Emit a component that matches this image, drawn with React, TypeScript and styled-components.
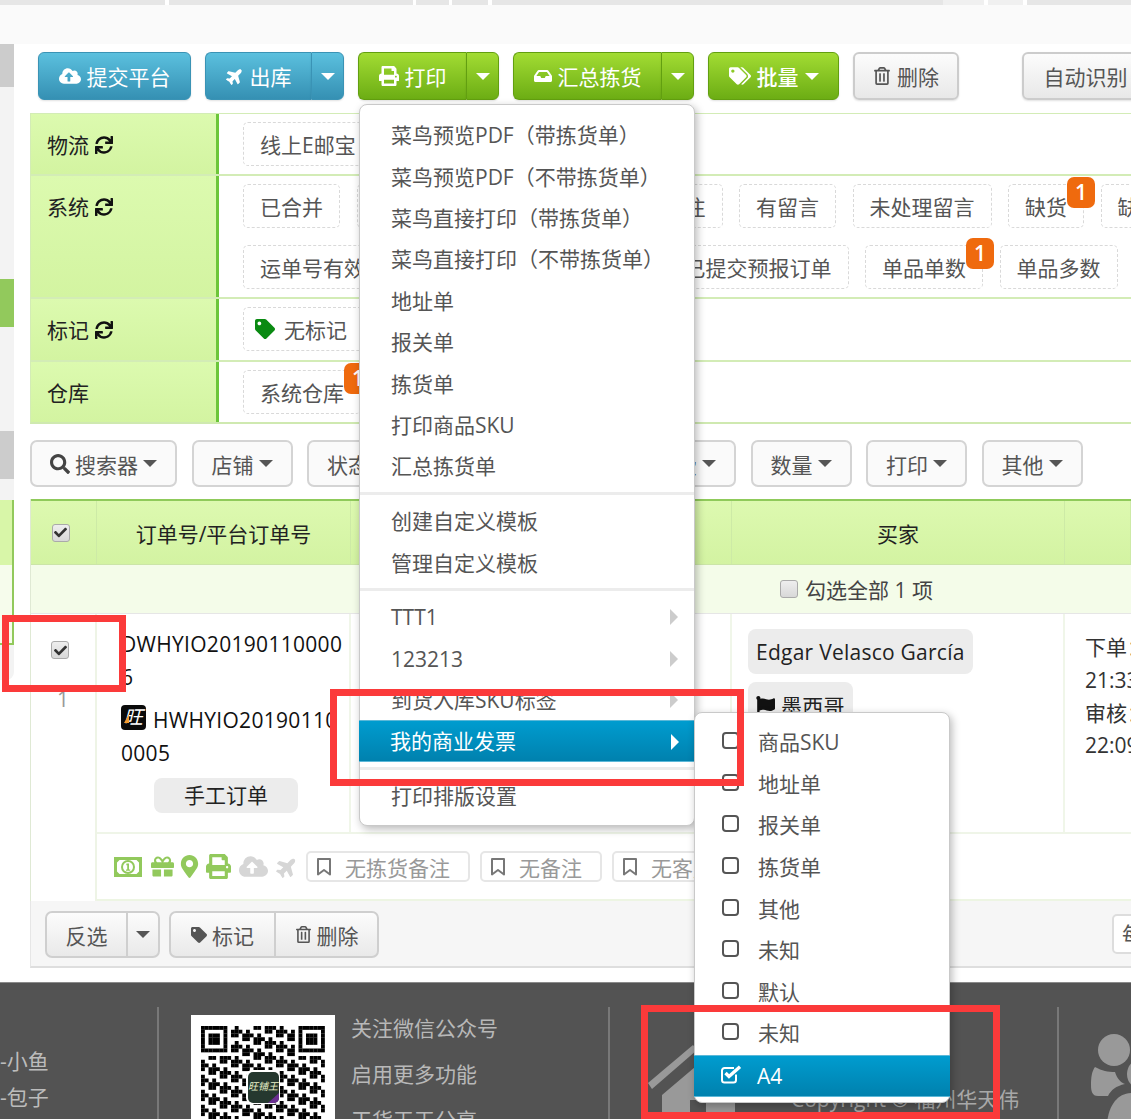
import React from 'react';
import styled, { createGlobalStyle, css } from 'styled-components';
import {
  FaCloudUploadAlt, FaPlane, FaPrint, FaInbox, FaTags, FaTag, FaRegTrashAlt, FaSync, FaSearch,
  FaCheck, FaGift, FaMapMarkerAlt, FaFlag,
} from 'react-icons/fa';

const FONT = '"Open Sans","Noto Sans CJK SC",sans-serif';

const Global = createGlobalStyle`
  html, body { margin: 0; padding: 0; background: #fff; }
  body { font-family: ${FONT}; font-size: 21px; color: #333; }
  * { box-sizing: border-box; }
`;

const Page = styled.div`
  position: relative;
  width: 1131px;
  height: 1119px;
  overflow: hidden;
  background: #fff;
`;

const TopStrip = styled.div`
  height: 5px;
  background: linear-gradient(90deg,
    #e6e6e6 165px, #fff 165px, #fff 169px, #e6e6e6 169px,
    #e6e6e6 413px, #fff 413px, #fff 416px, #e6e6e6 416px,
    #e6e6e6 449px, #fff 449px, #fff 452px, #e6e6e6 452px,
    #e6e6e6 488px, #fff 488px, #fff 492px, #e6e6e6 492px,
    #e6e6e6 943px, #f0f0f0 943px, #f0f0f0 984px, #fff 984px, #fff 988px, #f0f0f0 988px,
    #f0f0f0 1023px, #fff 1023px, #fff 1027px, #e6e6e6 1027px);
`;

const HeadBand = styled.div`
  height: 39px;
  background: #fafafa;
`;

const Body = styled.div`
  display: flex;
  height: 938px;
`;

const Side = styled.div`
  flex: 0 0 14px;
  display: flex;
  flex-direction: column;
`;

const SideBlock = styled.div<{ $h: number; $c: string; $edge?: boolean; $round?: boolean }>`
  height: ${p => p.$h}px;
  background: ${p => p.$c};
  ${p => p.$edge && css`border-right: 2px solid #92c95c;`}
  ${p => p.$edge && p.$round && css`border-bottom: 2px solid #92c95c;`}
  ${p => p.$round && !p.$edge && css`border-bottom-right-radius: 8px;`}
`;

const Main = styled.div`
  flex: 1;
  min-width: 0;
  padding-left: 16px;
  display: flex;
  flex-direction: column;
`;

const Toolbar = styled.div`
  display: flex;
  gap: 14px;
  padding: 8px 0 0 8px;
  width: 1300px;
`;

const variants = {
  blue: css`
    background: linear-gradient(180deg, #5bc0de, #3590b3);
    border: 1px solid #3a93b5;
    color: #fff;
  `,
  green: css`
    background: linear-gradient(180deg, #a2dc33, #6cad14);
    border: 1px solid #629f10;
    color: #fff;
  `,
  gray: css`
    background: linear-gradient(180deg, #fcfcfc, #e8e8e8);
    border: 2px solid #cccccc;
    color: #555;
  `,
};

type Kind = keyof typeof variants;

const ToolGroup = styled.div<{ $ml?: number }>`
  display: flex;
  flex: 0 0 auto;
  margin-left: ${p => p.$ml ?? 0}px;
`;

const ToolBtn = styled.div<{ $kind: Kind; $split?: boolean; $px?: number; $bold?: boolean }>`
  ${p => variants[p.$kind]}
  flex: 0 0 auto;
  height: 48px;
  padding: 0 ${p => p.$px ?? 19.5}px;
  display: flex;
  align-items: center;
  gap: 6px;
  border-radius: ${p => (p.$split ? '6px 0 0 6px' : '6px')};
  ${p => p.$split && css`border-right: none;`}
  ${p => p.$bold && css`font-weight: 500;`}
  white-space: nowrap;
  box-shadow: 0 1px 2px rgba(0,0,0,.12);
`;

const ToolCaret = styled.div<{ $kind: Kind }>`
  ${p => variants[p.$kind]}
  width: 33px;
  height: 48px;
  display: flex;
  align-items: center;
  justify-content: center;
  border-radius: 0 6px 6px 0;
  box-shadow: 0 1px 2px rgba(0,0,0,.12);
`;

const Caret = styled.i`
  display: inline-block;
  flex: 0 0 auto;
  width: 0;
  height: 0;
  border-left: 7px solid transparent;
  border-right: 7px solid transparent;
  border-top: 7px solid currentColor;
`;

const Panel = styled.div`
  margin-top: 13px;
  width: 1101px;
  border-top: 1px solid #d3ecb6;
  border-bottom: 2px solid #cfe9b0;
  border-left: 1px solid #d3ecb6;
`;

const PanelRow = styled.div<{ $last?: boolean }>`
  display: flex;
  ${p => !p.$last && css`border-bottom: 2px solid #d3ecb6;`}
`;

const PanelLabel = styled.div`
  flex: 0 0 188px;
  padding: 15px 0 0 16px;
  border-right: 3px solid #6cc63a;
  background: linear-gradient(180deg, #dcfaaf, #d3f4a1);
  color: #222;
  line-height: 32px;
  display: flex;
  align-items: flex-start;
  gap: 6px;
  & svg { margin-top: 7px; color: #111; }
`;

const PanelTags = styled.div`
  flex: 1;
  min-width: 0;
  display: flex;
  flex-direction: column;
  gap: 16.7px;
  padding: 8px 0 8.4px 24px;
`;

const TagLine = styled.div`
  display: flex;
  gap: 16.5px;
`;

const Tag = styled.div`
  position: relative;
  flex: 0 0 auto;
  height: 44px;
  padding: 0 16px;
  display: flex;
  align-items: center;
  gap: 9px;
  border: 1px dashed #d9d9d9;
  border-radius: 5px;
  color: #555;
  white-space: nowrap;
`;

const MarkIcon = styled(FaTag)`
  margin-left: -5px;
  color: #0a8a12;
`;

const Badge = styled.span`
  position: absolute;
  top: -8px;
  right: -12px;
  width: 28px;
  height: 31px;
  border-radius: 7px;
  background: #ef6a0e;
  color: #fff;
  font-size: 21px;
  font-weight: 600;
  line-height: 31px;
  text-align: center;
`;

const FilterBar = styled.div`
  display: flex;
  gap: 14.5px;
  margin-top: 16px;
  width: 1200px;
`;

const FilterBtn = styled.div<{ $w?: number }>`
  flex: 0 0 auto;
  height: 47px;
  padding: 0 18px;
  ${p => p.$w && css`width: ${p.$w}px; justify-content: flex-end;`}
  display: flex;
  align-items: center;
  gap: 5px;
  background: #fafafa;
  border: 2px solid #d4d4d4;
  border-radius: 7px;
  color: #555;
  white-space: nowrap;
`;

const Table = styled.div`
  margin-top: 12px;
  width: 1101px;
  border-left: 1px solid #dfe9d4;
`;

const HeaderRow = styled.div`
  display: grid;
  grid-template-columns: 66px 254px 381px 333px 1fr;
  height: 66px;
  border-top: 2px solid #8fca5a;
  border-bottom: 1px solid #cbe5a7;
  background: linear-gradient(180deg, #ddf9b0, #d3f3a2);
`;

const HeadCell = styled.div`
  display: flex;
  align-items: center;
  justify-content: center;
  border-right: 1px solid #cdeaa6;
  color: #222;
`;

const Check = styled.span<{ $on?: boolean }>`
  flex: 0 0 auto;
  width: 18px;
  height: 18px;
  ${p => p.$on && css`margin-right: 6px;`}
  display: inline-flex;
  align-items: center;
  justify-content: center;
  border: 1px solid #aaa;
  border-radius: 3px;
  background: linear-gradient(180deg, #eee, #d8d8d8);
  color: #333;
  font-size: 13px;
`;

const SelectAll = styled.div`
  height: 49px;
  padding-left: 749px;
  display: flex;
  align-items: center;
  gap: 7px;
  background: #f4fce9;
  border-bottom: 1px solid #e6e6e6;
  color: #444;
`;

const OrderRow = styled.div`
  display: flex;
`;

const IndexCell = styled.div`
  flex: 0 0 66px;
  display: flex;
  flex-direction: column;
  align-items: center;
  padding-top: 27px;
  gap: 26px;
  border-right: 2px solid #eef4e6;
  color: #999;
`;

const OrderBody = styled.div`
  flex: 1;
  min-width: 0;
`;

const Cells = styled.div`
  display: grid;
  grid-template-columns: 254px 381px 333px 1fr;
  height: 220px;
  border-bottom: 2px solid #eff5e8;
`;

const Cell = styled.div`
  border-right: 2px solid #f0f6e9;
`;

const OrderCell = styled(Cell)`
  padding: 14px 4px 0 24px;
  line-height: 33px;
  letter-spacing: 0.3px;
  color: #111;
  word-break: break-all;
`;

const PlatformLine = styled.div`
  margin-top: 10px;
`;

const ShopLogo = styled.span`
  position: relative;
  display: inline-flex;
  align-items: center;
  justify-content: center;
  width: 25px;
  height: 25px;
  margin-right: 7px;
  vertical-align: 4px;
  border-radius: 4px;
  background: #0a0a0a;
  color: #fff;
  font-size: 19px;
  font-style: italic;
  line-height: 25px;
  overflow: hidden;
  &::before {
    content: '';
    position: absolute;
    left: 3px;
    top: 9px;
    border-left: 5px solid transparent;
    border-bottom: 9px solid #f19a2e;
  }
`;

const ManualPill = styled.div`
  width: 144px;
  height: 35px;
  margin: 8px 0 0 33px;
  border-radius: 8px;
  background: #ececec;
  color: #222;
  letter-spacing: 0;
  line-height: 35px;
  text-align: center;
`;

const BuyerCell = styled(Cell)`
  padding: 15px 0 0 16px;
  display: flex;
  flex-direction: column;
  align-items: flex-start;
  gap: 8px;
`;

const BuyerPill = styled.div`
  display: inline-flex;
  align-items: center;
  gap: 6px;
  height: 45px;
  padding: 1px 8px 0;
  border-radius: 8px;
  background: #ececec;
  color: #222;
  letter-spacing: 0.25px;
  white-space: nowrap;
`;

const TimeCell = styled.div`
  padding: 17px 0 0 20px;
  line-height: 32.7px;
  color: #333;
  white-space: pre;
`;

const Actions = styled.div`
  height: 67px;
  padding: 0 0 0 12px;
  display: flex;
  align-items: center;
  border-bottom: 2px solid #edf5e3;
  white-space: nowrap;
`;

const ActionIcon = styled.span<{ $w: number; $off?: boolean }>`
  flex: 0 0 ${p => p.$w}px;
  display: flex;
  justify-content: center;
  color: ${p => (p.$off ? '#d6d6d6' : '#92c95c')};
`;

const NoteRow = styled.div`
  display: flex;
  gap: 10px;
  margin-left: 4px;
`;

const Note = styled.div`
  flex: 0 0 auto;
  height: 31px;
  padding: 0 18px 0 8px;
  display: flex;
  align-items: center;
  gap: 13px;
  border: 2px solid #e6e6e6;
  border-radius: 5px;
  color: #999;
`;

const Pager = styled.div`
  width: 1101px;
  height: 67px;
  padding: 10px 0 0 14px;
  display: flex;
  align-items: flex-start;
  background: #f6f6f6;
  border-bottom: 2px solid #dedede;
  border-left: 1px solid #e6e6e6;
`;

const PagerBtn = styled.div<{ $pos: 'l' | 'r'; $w: number }>`
  width: ${p => p.$w}px;
  height: 47px;
  display: flex;
  align-items: center;
  justify-content: center;
  gap: 5px;
  background: linear-gradient(180deg, #fcfcfc, #e9e9e9);
  border: 2px solid #cfcfcf;
  color: #555;
  border-radius: ${p => (p.$pos === 'l' ? '7px 0 0 7px' : '0 7px 7px 0')};
  ${p => p.$pos === 'r' && css`border-left-width: 1px;`}
  ${p => p.$pos === 'l' && css`border-right-width: 1px;`}
`;

const PagerGroup = styled.div<{ $ml?: number }>`
  display: flex;
  margin-left: ${p => p.$ml ?? 0}px;
`;

const PageSize = styled.div`
  flex: 0 0 90px;
  height: 40px;
  margin: 3px 0 0 733px;
  padding-left: 8px;
  background: #fff;
  border: 2px solid #ddd;
  border-radius: 5px;
  color: #555;
  line-height: 36px;
  white-space: nowrap;
`;

const Footer = styled.div`
  height: 137px;
  display: grid;
  grid-template-columns: 159px 451px 449px 1fr;
  padding-top: 24px;
  background: #535353;
  border-top: 1px solid #8a8a8a;
  color: #bcbcbc;
`;

const FootCol = styled.div<{ $line?: boolean }>`
  position: relative;
  height: 200px;
  ${p => p.$line && css`border-right: 2px solid #787878;`}
`;

const ContactCol = styled(FootCol)`
  padding-top: 36px;
  line-height: 36px;
`;

const WechatCol = styled(FootCol)`
  display: flex;
  padding: 8px 0 0 32px;
  gap: 16px;
`;

const QrBox = styled.div`
  flex: 0 0 144px;
  height: 144px;
  background: #fff;
`;

const WechatText = styled.div`
  margin-top: -10px;
  line-height: 46px;
  color: #b8b8b8;
`;

const HomeCol = styled(FootCol)`
  display: flex;
  padding: 20px 0 0 37px;
`;

const Copyright = styled.div`
  position: absolute;
  left: 181px;
  top: 76px;
  color: #a8a8a8;
  white-space: nowrap;
`;

const PeopleCol = styled(FootCol)`
  padding: 20px 0 0 31px;
`;

const Menu = styled.div<{ $x: number; $y: number; $w: number; $h: number }>`
  position: absolute;
  left: ${p => p.$x}px;
  top: ${p => p.$y}px;
  width: ${p => p.$w}px;
  height: ${p => p.$h}px;
  padding-top: 9.3px;
  background: #fff;
  border: 1px solid #c9c9c9;
  border-radius: 8px;
  box-shadow: 2px 3px 8px rgba(0,0,0,.28);
  color: #555;
  z-index: 2;
`;

const Item = styled.div<{ $active?: boolean; $sub?: boolean }>`
  position: relative;
  height: ${p => (p.$sub ? 41.6 : 41.4)}px;
  padding-left: ${p => (p.$sub ? 63 : 31)}px;
  line-height: ${p => (p.$sub ? 41.4 : 43)}px;
  white-space: nowrap;
  ${p => p.$active && css`
    margin: 0 -1px;
    color: #fff;
    background: linear-gradient(180deg, #009ccf, #0081ae);
    border-top: 1px solid #5cb8d8;
    border-bottom: 1px solid #5cb8d8;
    line-height: 40.4px;
  `}
`;

const Arrow = styled.i<{ $active?: boolean }>`
  position: absolute;
  right: 16px;
  top: 13px;
  border-top: 8px solid transparent;
  border-bottom: 8px solid transparent;
  border-left: 8px solid ${p => (p.$active ? '#fff' : '#ccc')};
`;

const Divider = styled.div`
  height: 3px;
  margin: 5px 0 5.3px;
  background: #ececec;
`;

const SubBox = styled.span`
  position: absolute;
  left: 27px;
  top: 10px;
  width: 17px;
  height: 17px;
  border: 2px solid #555;
  border-radius: 4px;
`;

const SubCheck = styled.span`
  position: absolute;
  left: 27px;
  top: 9px;
  display: flex;
`;

const RedBox = styled.div<{ $x: number; $y: number; $w: number; $h: number }>`
  position: absolute;
  left: ${p => p.$x}px;
  top: ${p => p.$y}px;
  width: ${p => p.$w}px;
  height: ${p => p.$h}px;
  border: 7px solid #fb3a3a;
  z-index: 3;
`;

const BookmarkIcon = () => (
  <svg width="16" height="18" viewBox="0 0 16 18" fill="none" stroke="#777" strokeWidth="2" strokeLinejoin="round">
    <path d="M2 1h12v15.500l-6-4.500-6 4.500z" />
  </svg>
);

const CheckSquareIcon = () => (
  <svg width="21" height="19" viewBox="0 0 21 19" fill="none" stroke="#fff">
    <path d="M15 9.500V15a2.500 2.500 0 0 1-2.500 2.500H3.500A2.500 2.500 0 0 1 1 15V5.500A2.500 2.500 0 0 1 3.500 3H13" strokeWidth="2" />
    <path d="M4.500 8 8 11.500 19 1.800" strokeWidth="3.400" />
  </svg>
);

const MoneyIcon = () => (
  <svg width="28" height="20" viewBox="0 0 28 20">
    <path fill="#92c95c" fillRule="evenodd" d="M0 0h28v20H0zM5.500 3 3 5.500v9L5.500 17h17l2.500-2.500v-9L22.500 3z" />
    <circle cx="14" cy="10" r="7" fill="#92c95c" />
    <circle cx="14" cy="10" r="5" fill="#fff" />
    <path fill="#92c95c" d="M12.500 6.500h2.500v6h1.200v1.300h-4.200v-1.300h1.200V8.200h-1z" />
  </svg>
);

const Qr = () => {
  const N = 33;
  const cell = 3.75;
  const inFinder = (x: number, y: number, ox: number, oy: number) => x >= ox && x < ox + 8 && y >= oy && y < oy + 8;
  const finderOn = (x: number, y: number, ox: number, oy: number) => {
    const a = x - ox;
    const b = y - oy;
    if (a === 7 || b === 7 || a < 0 || b < 0) return false;
    if (a === 0 || a === 6 || b === 0 || b === 6) return true;
    return a >= 2 && a <= 4 && b >= 2 && b <= 4;
  };
  const cells: React.ReactNode[] = [];
  let seed = 20190110;
  for (let y = 0; y < N; y += 1) {
    for (let x = 0; x < N; x += 1) {
      seed = (seed * 1103 + 12345) % 2147483;
      let on = (seed >> 6) % 100 < 52;
      if (inFinder(x, y, 0, 0)) on = finderOn(x, y, 0, 0);
      else if (inFinder(x, y, 25, 0)) on = finderOn(x, y, 26, 0);
      else if (inFinder(x, y, 0, 25)) on = finderOn(x, y, 0, 26);
      if (on) cells.push(<rect key={`${x}-${y}`} x={x * cell + 10} y={y * cell + 11} width={cell + 0.1} height={cell + 0.1} />);
    }
  }
  return (
    <svg width="144" height="144" viewBox="0 0 144 144">
      <g fill="#000">{cells}</g>
      <rect x="55" y="55" width="34" height="34" rx="6" fill="#fff" />
      <rect x="57" y="57" width="31" height="31" rx="5" fill="#25382f" />
      <path d="M88 78v5a5 5 0 0 1-5 5h-6z" fill="#6a2f91" />
      <text x="72" y="75" textAnchor="middle" fontSize="10" fontStyle="italic" fill="#e8f0c8" fontFamily={FONT}>旺铺王</text>
    </svg>
  );
};

const HomeIcon = () => (
  <svg width="100" height="92" viewBox="0 0 100 92" fill="#999999">
    <path d="M1 56 46 18l4 5L5 62z" />
    <path d="M15 68 48 40l40 30v22H59V73H43v19H15z" />
  </svg>
);

const PeopleIcon = () => (
  <svg width="60" height="100" viewBox="0 0 60 100" fill="#999999">
    <circle cx="24" cy="23" r="16" />
    <path d="M5 40c7 4 13 5 20 5 2 6 5 10 10 12-9 2-14 6-17 12H8C2 69 1 64 1 58 1 50 2 44 5 40z" />
    <circle cx="53" cy="47" r="16" />
    <path d="M17 100c0-17 8-34 25-34l20 0v34z" />
  </svg>
);

const Refresh = () => <FaSync size={18} />;

const sysTags1: { t: string; b?: boolean }[] = [
  { t: '已合并' }, { t: '未合并' }, { t: '有备注' }, { t: '未处理备注' }, { t: '有留言' }, { t: '未处理留言' }, { t: '缺货', b: true }, { t: '缺货已处理' },
];
const sysTags2: { t: string; b?: boolean }[] = [
  { t: '运单号有效' }, { t: '运单号无效' }, { t: '未提交' }, { t: '已提交预报订单' }, { t: '单品单数', b: true }, { t: '单品多数' },
];
const printItems1 = ['菜鸟预览PDF（带拣货单）', '菜鸟预览PDF（不带拣货单）', '菜鸟直接打印（带拣货单）', '菜鸟直接打印（不带拣货单）', '地址单', '报关单', '拣货单', '打印商品SKU', '汇总拣货单'];
const subItems = ['商品SKU', '地址单', '报关单', '拣货单', '其他', '未知', '默认', '未知'];
const filters = ['店铺', '状态', '平台', '运费'];
const filters2 = ['数量', '打印', '其他'];

export default function App() {
  return (
    <Page>
      <Global />
      <TopStrip />
      <HeadBand />
      <Body>
        <Side>
          <SideBlock $h={43} $c="#cccccc" />
          <SideBlock $h={192} $c="#f3f3f3" />
          <SideBlock $h={48} $c="#92c95c" />
          <SideBlock $h={104} $c="#f3f3f3" />
          <SideBlock $h={48} $c="#cccccc" />
          <SideBlock $h={21} $c="#f3f3f3" />
          <SideBlock $h={65} $c="#d8f6a8" $edge />
          <SideBlock $h={80} $c="#f6fcec" $edge $round />
          <SideBlock $h={35} $c="#f3f3f3" $round />
        </Side>
        <Main>
          <Toolbar>
            <ToolBtn $kind="blue"><FaCloudUploadAlt size={22} />提交平台</ToolBtn>
            <ToolGroup>
              <ToolBtn $kind="blue" $split><FaPlane size={18} style={{ transform: 'rotate(-45deg)' }} />出库</ToolBtn>
              <ToolCaret $kind="blue"><Caret /></ToolCaret>
            </ToolGroup>
            <ToolGroup>
              <ToolBtn $kind="green" $split><FaPrint size={20} />打印</ToolBtn>
              <ToolCaret $kind="green"><Caret /></ToolCaret>
            </ToolGroup>
            <ToolGroup>
              <ToolBtn $kind="green" $split><FaInbox size={18} />汇总拣货</ToolBtn>
              <ToolCaret $kind="green"><Caret /></ToolCaret>
            </ToolGroup>
            <ToolBtn $kind="green" $bold><FaTags size={22} />批量<Caret /></ToolBtn>
            <ToolBtn $kind="gray" $px={18}><FaRegTrashAlt size={18} />删除</ToolBtn>
            <ToolGroup $ml={49}>
              <ToolBtn $kind="gray">自动识别</ToolBtn>
            </ToolGroup>
          </Toolbar>

          <Panel>
            <PanelRow>
              <PanelLabel>物流 <Refresh /></PanelLabel>
              <PanelTags><TagLine><Tag>线上E邮宝</Tag></TagLine></PanelTags>
            </PanelRow>
            <PanelRow>
              <PanelLabel>系统 <Refresh /></PanelLabel>
              <PanelTags>
                <TagLine>
                  {sysTags1.map((x, i) => <Tag key={i}>{x.t}{x.b && <Badge>1</Badge>}</Tag>)}
                </TagLine>
                <TagLine>
                  {sysTags2.map((x, i) => <Tag key={i}>{x.t}{x.b && <Badge>1</Badge>}</Tag>)}
                </TagLine>
              </PanelTags>
            </PanelRow>
            <PanelRow>
              <PanelLabel>标记 <Refresh /></PanelLabel>
              <PanelTags><TagLine><Tag><MarkIcon size={20} />无标记</Tag></TagLine></PanelTags>
            </PanelRow>
            <PanelRow $last>
              <PanelLabel>仓库</PanelLabel>
              <PanelTags><TagLine><Tag>系统仓库<Badge>1</Badge></Tag></TagLine></PanelTags>
            </PanelRow>
          </Panel>

          <FilterBar>
            <FilterBtn><FaSearch size={20} color="#444" />搜索器<Caret /></FilterBtn>
            {filters.map((f, i) => (
              <FilterBtn key={f} $w={i === 2 ? 198 : i === 3 ? 101 : undefined}>{f}<Caret /></FilterBtn>
            ))}
            {filters2.map(f => <FilterBtn key={f}>{f}<Caret /></FilterBtn>)}
          </FilterBar>

          <Table>
            <HeaderRow>
              <HeadCell><Check $on><FaCheck /></Check></HeadCell>
              <HeadCell>订单号/平台订单号</HeadCell>
              <HeadCell>商品信息</HeadCell>
              <HeadCell>买家</HeadCell>
              <HeadCell />
            </HeaderRow>
            <SelectAll><Check />勾选全部 1 项</SelectAll>
            <OrderRow>
              <IndexCell>
                <Check $on><FaCheck /></Check>
                <span>1</span>
              </IndexCell>
              <OrderBody>
                <Cells>
                  <OrderCell>
                    DWHYIO201901100006
                    <PlatformLine><ShopLogo>旺</ShopLogo>HWHYIO201901100005</PlatformLine>
                    <ManualPill>手工订单</ManualPill>
                  </OrderCell>
                  <Cell />
                  <BuyerCell>
                    <BuyerPill>Edgar Velasco García</BuyerPill>
                    <BuyerPill><FaFlag size={19} color="#111" />墨西哥</BuyerPill>
                  </BuyerCell>
                  <TimeCell>{'下单：2019-01-10\n21:33\n审核：2019-01-10\n22:09'}</TimeCell>
                </Cells>
                <Actions>
                  <ActionIcon $w={38}><MoneyIcon /></ActionIcon>
                  <ActionIcon $w={30}><FaGift size={23} /></ActionIcon>
                  <ActionIcon $w={25}><FaMapMarkerAlt size={23} /></ActionIcon>
                  <ActionIcon $w={33}><FaPrint size={25} /></ActionIcon>
                  <ActionIcon $w={36} $off><FaCloudUploadAlt size={29} /></ActionIcon>
                  <ActionIcon $w={31} $off><FaPlane size={22} style={{ transform: 'rotate(-45deg)' }} /></ActionIcon>
                  <NoteRow>
                    <Note><BookmarkIcon />无拣货备注</Note>
                    <Note><BookmarkIcon />无备注</Note>
                    <Note><BookmarkIcon />无客户备注</Note>
                  </NoteRow>
                </Actions>
              </OrderBody>
            </OrderRow>
          </Table>

          <Pager>
            <PagerGroup>
              <PagerBtn $pos="l" $w={82}>反选</PagerBtn>
              <PagerBtn $pos="r" $w={33}><Caret /></PagerBtn>
            </PagerGroup>
            <PagerGroup $ml={9}>
              <PagerBtn $pos="l" $w={106}><FaTag size={16} />标记</PagerBtn>
              <PagerBtn $pos="r" $w={104}><FaRegTrashAlt size={17} />删除</PagerBtn>
            </PagerGroup>
            <PageSize>每页</PageSize>
          </Pager>
        </Main>
      </Body>

      <Footer>
        <ContactCol $line>
          <div>-小鱼</div>
          <div>-包子</div>
        </ContactCol>
        <WechatCol $line>
          <QrBox><Qr /></QrBox>
          <WechatText>
            <div>关注微信公众号</div>
            <div>启用更多功能</div>
            <div>干货天天分享</div>
          </WechatText>
        </WechatCol>
        <HomeCol $line>
          <HomeIcon />
          <Copyright>Copyright © 福州华天伟</Copyright>
        </HomeCol>
        <PeopleCol><PeopleIcon /></PeopleCol>
      </Footer>

      <Menu $x={359} $y={104} $w={336} $h={722}>
        {printItems1.map(t => <Item key={t}>{t}</Item>)}
        <Divider />
        <Item>创建自定义模板</Item>
        <Item>管理自定义模板</Item>
        <Divider />
        <Item>TTT1<Arrow /></Item>
        <Item>123213<Arrow /></Item>
        <Item>到货入库SKU标签<Arrow /></Item>
        <Item $active>我的商业发票<Arrow $active /></Item>
        <Divider />
        <Item>打印排版设置</Item>
      </Menu>

      <Menu $x={694} $y={712} $w={256} $h={391}>
        {subItems.map((t, i) => <Item key={i} $sub><SubBox />{t}</Item>)}
        <Item $sub $active><SubCheck><CheckSquareIcon /></SubCheck>A4</Item>
      </Menu>

      <RedBox $x={2} $y={615} $w={124} $h={77} />
      <RedBox $x={330} $y={689} $w={414} $h={97} />
      <RedBox $x={641} $y={1005} $w={359} $h={114} />
    </Page>
  );
}
